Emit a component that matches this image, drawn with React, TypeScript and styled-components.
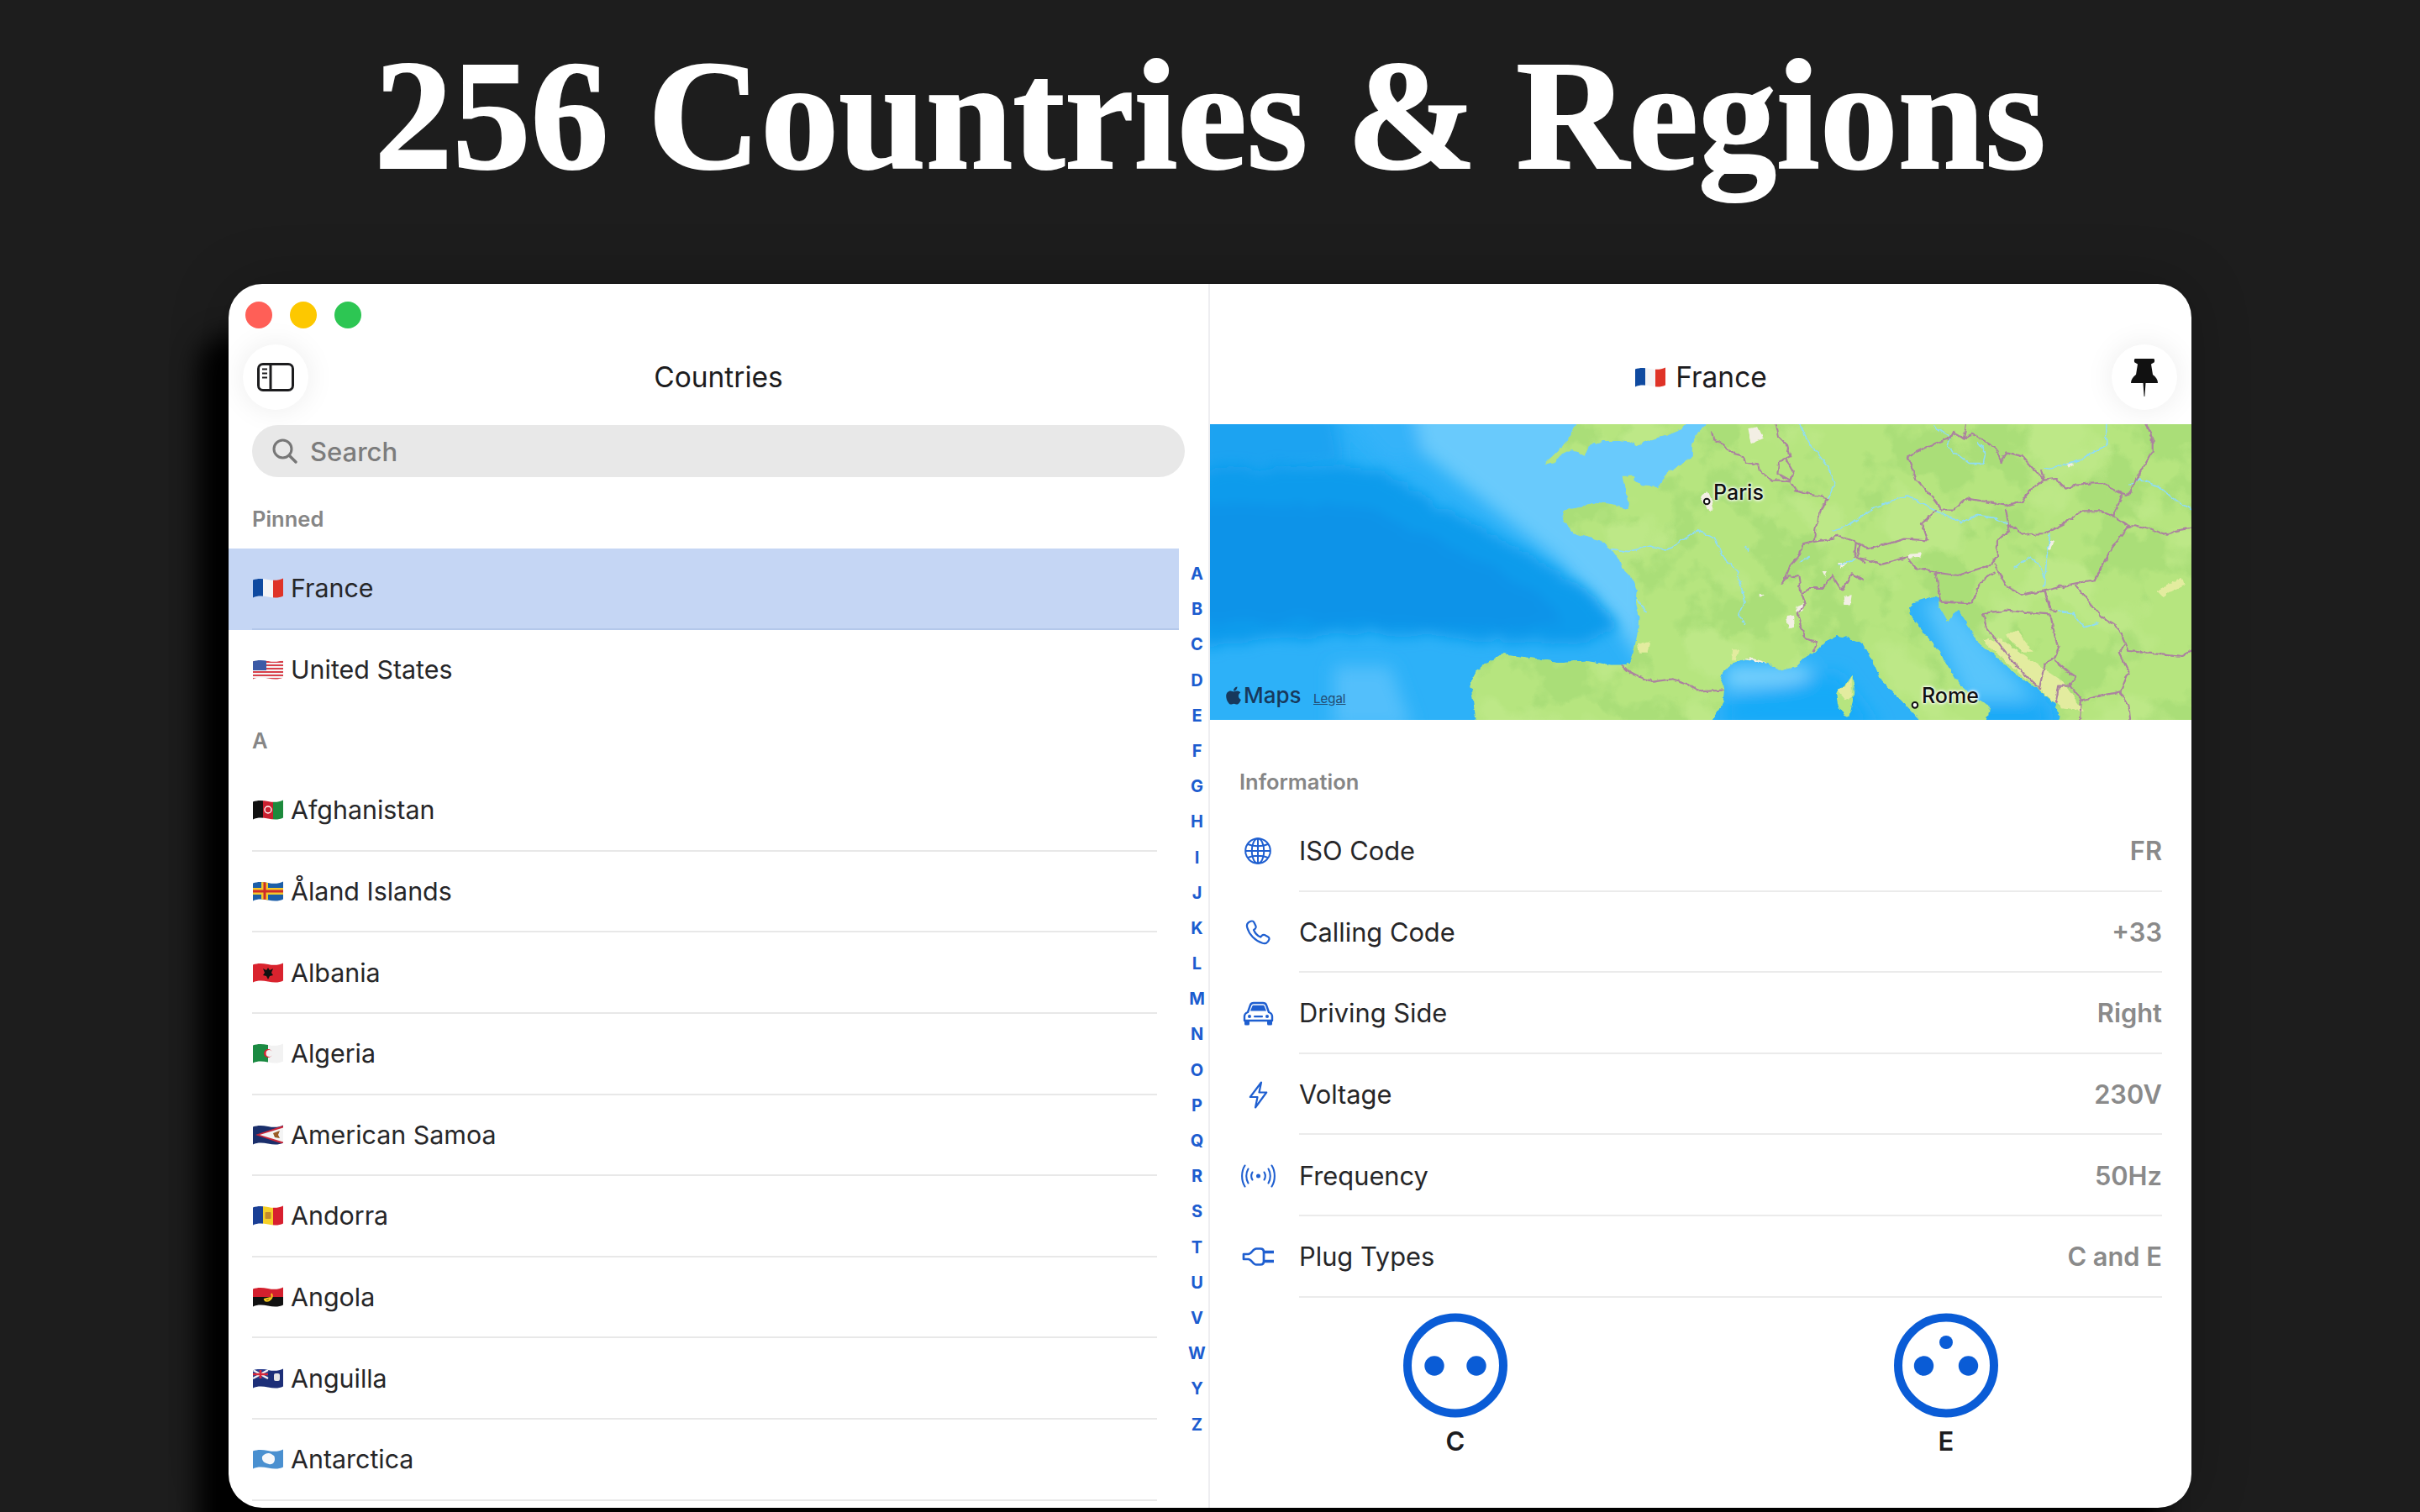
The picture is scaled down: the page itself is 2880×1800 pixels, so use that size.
import { createGlobalStyle, styled } from 'styled-components';
import type { ReactNode } from 'react';
import { FaApple } from 'react-icons/fa';

const GlobalStyle = createGlobalStyle`
    html, body {
        margin: 0;
        background: #1d1d1d;
    }
    body {
        width: 2880px;
        height: 1800px;
        overflow: hidden;
        font-family: Inter, "Liberation Sans", sans-serif;
    }
`

const Page = styled.div`
    display: flex;
    flex-direction: column;
    width: 2880px;
    height: 1800px;
    background: #1d1d1d;
    overflow: hidden;
`

const Headline = styled.h1`
    margin: 0;
    height: 338px;
    padding-top: 37px;
    box-sizing: border-box;
    text-align: center;
    color: #fff;
    font-family: "Liberation Serif", serif;
    font-weight: 700;
    font-size: 186px;
    line-height: 200px;
    white-space: nowrap;
    -webkit-text-stroke: 2px #fff;
`

const Window = styled.div`
    display: flex;
    margin-left: 272px;
    width: 2336px;
    height: 1457px;
    flex-shrink: 0;
    background: #fff;
    border-radius: 40px;
    overflow: hidden;
    box-shadow: -36px 60px 30px #000, 0 0 70px rgba(0, 0, 0, 0.22);
`

const LeftPane = styled.section`
    display: flex;
    flex-direction: column;
    width: 1168px;
    box-sizing: border-box;
    flex-shrink: 0;
    border-right: 2px solid #eeeef1;
`

const RightPane = styled.section`
    display: flex;
    flex-direction: column;
    flex: 1;
    min-width: 0;
`

const TrafficRow = styled.div`
    display: flex;
    align-items: center;
    gap: 21px;
    height: 72px;
    padding: 2px 0 0 20px;
    box-sizing: border-box;
`

const TrafficLight = styled.span<{ $color: string }>`
    width: 32px;
    height: 32px;
    border-radius: 50%;
    background: ${(p) => p.$color};
`

const Toolbar = styled.div`
    display: grid;
    grid-template-columns: 78px 1fr 78px;
    align-items: center;
    height: 78px;
    padding: 0 17px;
`

const RightHeader = styled.div`
    height: 167px;
    display: flex;
    flex-direction: column;
    justify-content: flex-end;
    padding-bottom: 17px;
    box-sizing: border-box;
`

const CircleButton = styled.div`
    display: flex;
    align-items: center;
    justify-content: center;
    width: 78px;
    height: 78px;
    border-radius: 50%;
    background: #fff;
    box-shadow: 0 0 34px rgba(0, 0, 0, 0.08);
`

const ToolbarTitle = styled.div`
    display: flex;
    align-items: center;
    justify-content: center;
    gap: 12px;
    font-size: 33.5px;
    color: #1c1c1e;
`

const SearchBar = styled.div`
    display: flex;
    align-items: center;
    gap: 15px;
    height: 62px;
    margin: 18px 28px 0;
    padding-left: 24px;
    border-radius: 31px;
    background: #e8e8e8;
    color: #7c7c7c;
    font-size: 31px;
    font-weight: 500;
`

const ListArea = styled.div`
    display: flex;
    flex: 1;
    min-height: 0;
`

const List = styled.div`
    flex: 1;
    min-width: 0;
    overflow: hidden;
`

const SectionHeader = styled.div<{ $first?: boolean }>`
    display: flex;
    align-items: center;
    height: 71px;
    margin-top: ${(p) => (p.$first ? '14px' : '0')};
    padding-left: 28px;
    color: #868686;
    font-size: 25.5px;
    font-weight: 600;
`

const CountryRow = styled.div<{ $selected?: boolean }>`
    height: 96.6px;
    padding-left: 28px;
    padding-right: ${(p) => (p.$selected ? '0' : '26px')};
    background: ${(p) => (p.$selected ? '#c5d6f4' : 'transparent')};
`

const CountryInner = styled.div<{ $rule: string }>`
    display: flex;
    align-items: center;
    gap: 9px;
    height: 100%;
    box-sizing: border-box;
    border-bottom: 2px solid ${(p) => p.$rule};
    font-size: 30.4px;
    color: #262628;
`

const AlphaIndex = styled.div`
    display: flex;
    flex-direction: column;
    align-items: center;
    width: 35px;
    box-sizing: border-box;
    padding: 94px 0 0 8px;
    flex-shrink: 0;
`

const AlphaLetter = styled.span`
    height: 42.2px;
    line-height: 42.2px;
    color: #1c5ccf;
    font-size: 20px;
    font-weight: 700;
`

const FlagSvg = styled.svg`
    width: 36px;
    height: 24px;
    flex-shrink: 0;
    margin-left: 1px;
`

const MapBox = styled.div`
    position: relative;
    height: 352px;
    overflow: hidden;
    background: #2db1f8;
`

const MapSvg = styled.svg`
    display: block;
    width: 100%;
    height: 100%;
`

const CityLabel = styled.span<{ $left: number; $top: number }>`
    position: absolute;
    left: ${(p) => p.$left}px;
    top: ${(p) => p.$top}px;
    color: #111;
    font-size: 25px;
    line-height: 30px;
    font-weight: 500;
    text-shadow: 0 0 3px #fff, 0 0 3px #fff, 0 0 5px #fff;
`

const MapsMark = styled.div`
    position: absolute;
    left: 16px;
    top: 307px;
    display: flex;
    align-items: center;
    color: #17395c;
    font-size: 26px;
    line-height: 32px;
    font-weight: 500;
`

const LegalLink = styled.span`
    position: absolute;
    left: 123px;
    top: 318px;
    color: #234a70;
    font-size: 15px;
    line-height: 18px;
    text-decoration: underline;
`

const InfoHeader = styled.div`
    display: flex;
    align-items: flex-end;
    height: 108px;
    padding: 0 0 19px 35px;
    box-sizing: border-box;
    color: #868686;
    font-size: 25.5px;
    font-weight: 600;
`

const InfoRow = styled.div`
    display: flex;
    align-items: stretch;
    height: 96.6px;
    padding: 0 35px 0 36px;
`

const IconCell = styled.div`
    display: flex;
    align-items: center;
    justify-content: center;
    width: 42px;
    margin-right: 28px;
    flex-shrink: 0;
`

const InfoBody = styled.div`
    display: flex;
    flex: 1;
    align-items: center;
    justify-content: space-between;
    box-sizing: border-box;
    padding-top: 1px;
    border-bottom: 2px solid #ebebeb;
    font-size: 30.8px;
    color: #262628;
`

const InfoValue = styled.span`
    color: #8a8a8a;
    font-weight: 600;
`

const PlugGrid = styled.div`
    display: grid;
    grid-template-columns: 1fr 1fr;
    padding-top: 18px;
`

const PlugItem = styled.div`
    display: flex;
    flex-direction: column;
    align-items: center;
    gap: 9px;
    font-size: 31px;
    font-weight: 600;
    color: #1c1c1e;
`

const waveClip = 'M0 2.5C5 .5 11 .5 18 2S31 3 36 .5V21.5C31 24 25 24 18 22.5S5 21 0 23.5Z';

const Flag = ({ name, children }: { name: string; children: ReactNode }) => {
    const id = 'flag-' + name.replace(/\W/g, '');
    return (
        <FlagSvg viewBox="0 0 36 24" aria-hidden>
            <defs>
                <clipPath id={id}><path d={waveClip} /></clipPath>
            </defs>
            <g clipPath={`url(#${id})`}>{children}</g>
        </FlagSvg>
    );
};

const flagArt: Record<string, ReactNode> = {
    France: (
        <>
            <rect width="12" height="24" fill="#0f4aa0" />
            <rect x="12" width="12" height="24" fill="#f4f4f6" />
            <rect x="24" width="12" height="24" fill="#df3327" />
        </>
    ),
    'United States': (
        <>
            <rect width="36" height="24" fill="#f5f5f5" />
            {[2, 6, 10, 14, 18, 22].map((y) => <rect key={y} y={y} width="36" height="2" fill="#d8404a" />)}
            <rect width="16" height="13" fill="#3c5aa6" />
        </>
    ),
    Afghanistan: (
        <>
            <rect width="12" height="24" fill="#111" />
            <rect x="12" width="12" height="24" fill="#c8202f" />
            <rect x="24" width="12" height="24" fill="#1d8a3c" />
            <circle cx="18" cy="12" r="4" fill="none" stroke="#fff" strokeWidth="1.4" />
        </>
    ),
    'Åland Islands': (
        <>
            <rect width="36" height="24" fill="#1c5ea8" />
            <rect x="10" width="8" height="24" fill="#f3c72b" />
            <rect y="8" width="36" height="8" fill="#f3c72b" />
            <rect x="12.5" width="3" height="24" fill="#cf2a2a" />
            <rect y="10.5" width="36" height="3" fill="#cf2a2a" />
        </>
    ),
    Albania: (
        <>
            <rect width="36" height="24" fill="#d9232e" />
            <path d="M18 6l2 3 4-2-2 5 2 3-4 1-2 4-2-4-4-1 2-3-2-5 4 2z" fill="#111" />
        </>
    ),
    Algeria: (
        <>
            <rect width="18" height="24" fill="#1b8a42" />
            <rect x="18" width="18" height="24" fill="#f2f2f2" />
            <circle cx="18" cy="12" r="5" fill="#d92231" />
            <circle cx="19.5" cy="12" r="4" fill="#f2f2f2" />
        </>
    ),
    'American Samoa': (
        <>
            <rect width="36" height="24" fill="#1a2f6b" />
            <path d="M36 1L3 12l33 11z" fill="#c8273a" />
            <path d="M36 3.5L8 12l28 8.5z" fill="#f4f4f4" />
            <path d="M24 10l8-3-2 5 2 4-6-1z" fill="#9a5b26" />
        </>
    ),
    Andorra: (
        <>
            <rect width="12" height="24" fill="#1a3f95" />
            <rect x="12" width="12" height="24" fill="#f6d029" />
            <rect x="24" width="12" height="24" fill="#d8202f" />
            <rect x="14.5" y="8" width="7" height="8" rx="1" fill="#c58a2b" />
        </>
    ),
    Angola: (
        <>
            <rect width="36" height="12" fill="#d3202e" />
            <rect y="12" width="36" height="12" fill="#111" />
            <path d="M14 16a6 6 0 0 0 8-8M13 15l8-2" fill="none" stroke="#f6c91c" strokeWidth="2" />
        </>
    ),
    Anguilla: (
        <>
            <rect width="36" height="24" fill="#1d2f78" />
            <rect width="18" height="12" fill="#2a3d8f" />
            <path d="M0 2l18 10M18 2L0 12" stroke="#f4f4f4" strokeWidth="2.4" />
            <path d="M9 2v10M0 7h18" stroke="#d6273a" strokeWidth="2.6" />
            <rect x="25" y="6" width="7" height="9" rx="2" fill="#e6e6e6" />
        </>
    ),
    Antarctica: (
        <>
            <rect width="36" height="24" fill="#4a90d0" />
            <path d="M11 9c3-4 8-5 11-3s4 2 4 6-3 7-7 6-9-3-8-9z" fill="#f6f8fb" />
        </>
    ),
};

const SidebarIcon = () => (
    <svg width="44" height="34" viewBox="0 0 44 34" fill="none" stroke="#1c1c1e" strokeWidth="3">
        <rect x="1.5" y="1.5" width="41" height="31" rx="5.5" />
        <path d="M16 2v30" />
        <path d="M6 7.5h6M6 12.5h6M6 17.5h6" strokeWidth="2.2" />
    </svg>
);

const SearchIcon = () => (
    <svg width="30" height="30" viewBox="0 0 30 30" fill="none" stroke="#777" strokeWidth="3" strokeLinecap="round">
        <circle cx="12.5" cy="12.5" r="10.5" />
        <path d="M20.5 20.5L28 28" strokeWidth="3.4" />
    </svg>
);

const PinIcon = () => (
    <svg width="32" height="45" viewBox="0 0 32 45" fill="#111">
        <path d="M5 0H27C28.5 0 28.5 4.5 27 4.8L24 6.5 26 19C30 22 32 25 32 29H17.5L16.4 45H15.6L14.5 29H0C0 25 2 22 6 19L8 6.5 5 4.8C3.5 4.5 3.5 0 5 0Z" />
    </svg>
);

const GlobeIcon = () => (
    <svg width="32" height="32" viewBox="0 0 32 32" fill="none" stroke="#1f5fd0" strokeWidth="2">
        <circle cx="16" cy="16" r="14.8" />
        <ellipse cx="16" cy="16" rx="7.2" ry="14.8" />
        <path d="M16 1v30M1.2 16h29.6M4 8c7 3 17 3 24 0M4 24c7-3 17-3 24 0" />
    </svg>
);

const PhoneIcon = () => (
    <svg width="32" height="32" viewBox="0 0 32 32" fill="none" stroke="#1f5fd0" strokeWidth="2.2" strokeLinejoin="round">
        <path d="M9 2.5C10 2.5 11 3.2 11.5 4.2L13.5 8.5C14 9.6 13.7 10.8 12.8 11.6L11 13C12.5 16.8 15.4 20 19.2 21.6L21 19.6C21.8 18.8 23 18.6 24 19.1L28 21.2C29.5 22 30 23.8 29 25.2L28 26.8C26.5 28.8 24 29.6 21.5 28.8C12.5 25.8 5.5 18.5 3.2 10C2.5 7.5 3.5 4.8 5.8 3.5C6.8 2.9 8 2.5 9 2.5Z" />
    </svg>
);

const CarIcon = () => (
    <svg width="37" height="29" viewBox="0 0 37 29" fill="#1f5fd0">
        <path d="M6 13L9 4.5C9.7 2.6 11 2 13 2H24C26 2 27.3 2.6 28 4.5L31 13C33.5 14 35 15.5 35 18V23H2V18C2 15.5 3.5 14 6 13Z" fill="none" stroke="#1f5fd0" strokeWidth="2.4" strokeLinejoin="round" />
        <path d="M9 11.5L11.2 6C11.6 5 12.2 4.8 13 4.8H24C24.8 4.8 25.4 5 25.8 6L28 11.5Z" />
        <circle cx="8" cy="18" r="2" />
        <circle cx="29" cy="18" r="2" />
        <rect x="13" y="17" width="11" height="2.2" rx="1" />
        <rect x="2" y="22" width="6" height="6.5" rx="1.6" />
        <rect x="29" y="22" width="6" height="6.5" rx="1.6" />
    </svg>
);

const BoltIcon = () => (
    <svg width="23" height="33" viewBox="0 0 23 33" fill="none" stroke="#1f5fd0" strokeWidth="2.2" strokeLinejoin="round">
        <path d="M15 1.5L1.8 19H10.5L8 31.5L21.2 13.5H12.5Z" />
    </svg>
);

const WavesIcon = () => (
    <svg width="41" height="28" viewBox="0 0 41 28" fill="none" stroke="#1f5fd0" strokeWidth="2.1" strokeLinecap="round">
        <circle cx="20.5" cy="14" r="2.5" fill="#1f5fd0" stroke="none" />
        <path d="M13.5 9.5C12 12 12 16 13.5 18.5M27.5 9.5C29 12 29 16 27.5 18.5" />
        <path d="M8.5 5.5C5.5 10.5 5.5 17.5 8.5 22.5M32.5 5.5C35.5 10.5 35.5 17.5 32.5 22.5" />
        <path d="M4.5 1.5C0 8.5 0 19.5 4.5 26.5M36.5 1.5C41 8.5 41 19.5 36.5 26.5" />
    </svg>
);

const PlugIcon = () => (
    <svg width="39" height="24" viewBox="0 0 39 24" fill="none" stroke="#1f5fd0" strokeWidth="2.7" strokeLinejoin="round">
        <path d="M2 9H7.5C11.5 9 13 2.5 17 2.5H22C24.5 2.5 26 4 26 6.5V17.5C26 20 24.5 21.5 22 21.5H17C13 21.5 11.5 15 7.5 15H2Z" />
        <path d="M26 6.5H38M26 17.5H38" strokeWidth="3.4" />
    </svg>
);

const SocketIcon = ({ earth }: { earth?: boolean }) => (
    <svg width="124" height="125" viewBox="0 0 124 125" fill="#0a5cd6">
        <circle cx="62" cy="62.5" r="57" fill="none" stroke="#0a5cd6" strokeWidth="10" />
        <circle cx={earth ? 35.5 : 37} cy="63" r="11.7" />
        <circle cx={earth ? 88.5 : 87} cy="63" r="11.7" />
        {earth && <circle cx="62" cy="35" r="8" />}
    </svg>
);

const landShapes = [
    '50,155 85,155 110,125 150,105 195,130 210,90 260,75 320,75 370,80 380,90 430,70 490,55 540,35 565,0 170,0 150,45 120,90 80,130',
    '670,-20 600,45 580,90 580,130 540,160 490,190 475,215 460,240 400,235 375,215 370,200 330,200 340,250 355,300 350,315 290,300 240,295 190,310 115,325 120,360 145,385 155,405 215,420 250,430 290,460 320,500 330,530 370,570 385,610 380,660 390,700 385,760 370,830 355,870 330,875 290,875 200,860 100,865 40,855 0,850 -98,834 -190,893 -213,936 -190,1090 640,1090 690,1010 695,960 685,925 690,900 720,870 760,855 800,860 850,870 900,895 950,880 980,850 1020,830 1060,790 1100,770 1130,775 1140,780 1190,795 1225,860 1255,930 1310,985 1365,1040 1410,1090 1630,1090 1645,1020 1600,1000 1540,950 1490,870 1450,810 1400,750 1365,710 1355,670 1375,650 1440,630 1470,640 1460,660 1495,720 1510,690 1530,680 1570,740 1600,790 1670,850 1740,910 1820,965 1875,1010 1900,1090 2420,1090 2420,-20',
    '1095,975 1130,945 1150,915 1160,940 1155,1000 1140,1060 1120,1050 1100,1020',
];

// traced at 3x page pixels: x = (pageX - 1820) * 3, y = (pageY - 500) * 3
const MapArt = () => (
    <MapSvg viewBox="-1143 15 3507 1056" preserveAspectRatio="none" aria-hidden>
        <defs>
            <filter id="blurWide" x="-20%" y="-20%" width="140%" height="140%"><feGaussianBlur stdDeviation="30" /></filter>
            <filter id="depth" x="-10%" y="-10%" width="120%" height="120%">
                <feTurbulence type="fractalNoise" baseFrequency="0.02" numOctaves="4" seed="11" result="n" />
                <feDisplacementMap in="SourceGraphic" in2="n" scale="60" xChannelSelector="R" yChannelSelector="G" />
                <feGaussianBlur stdDeviation="24" />
            </filter>
            <filter id="rough" x="-3%" y="-3%" width="106%" height="106%">
                <feTurbulence type="fractalNoise" baseFrequency="0.04" numOctaves="3" seed="4" result="n" />
                <feDisplacementMap in="SourceGraphic" in2="n" scale="16" xChannelSelector="R" yChannelSelector="G" />
            </filter>
            <filter id="mottleDark" x="0" y="0" width="100%" height="100%" colorInterpolationFilters="sRGB">
                <feTurbulence type="fractalNoise" baseFrequency="0.005" numOctaves="4" seed="7" />
                <feColorMatrix values="0 0 0 0 0.665  0 0 0 0 0.87  0 0 0 0 0.47  10 0 0 0 -5" />
            </filter>
            <filter id="mottleLight" x="0" y="0" width="100%" height="100%" colorInterpolationFilters="sRGB">
                <feTurbulence type="fractalNoise" baseFrequency="0.004" numOctaves="3" seed="23" />
                <feColorMatrix values="0 0 0 0 0.74  0 0 0 0 0.91  0 0 0 0 0.53  0 8 0 0 -4.6" />
            </filter>
            <clipPath id="landClip">
                {landShapes.map((pts) => <polygon key={pts} points={pts} />)}
            </clipPath>
        </defs>
        <rect x="-1143" y="15" width="3507" height="1056" fill="#2db1f8" />
        <g filter="url(#blurWide)">
            <polygon fill="#34b3f9" points="-680,-40 -420,-40 -380,120 -500,160" />
            <polygon fill="#69cafc" points="-420,-40 700,-40 700,300 420,500 420,900 330,760 100,500 -150,300 -380,120" />
            <polygon fill="#52bffb" points="-700,880 -500,880 -420,1100 -700,1100" />
            <polygon fill="#7ad2fd" points="700,880 1000,880 1000,940 700,960" />
            <polygon fill="#19aaf8" points="700,1000 1100,900 1250,1100 700,1100" />
            <polygon fill="#59c5fb" points="1400,640 1500,640 1800,1000 1560,1000" />
            <polygon fill="#16a8f7" points="1500,1020 1840,1020 1860,1100 1480,1100" />
            <polygon fill="#1aa3f1" points="-1200,-40 -700,-40 -660,160 -1200,240" />
        </g>
        <g filter="url(#depth)">
            <polygon fill="#0b9bec" points="-1200,180 -640,160 -534,180 -328,304 -52,454 200,604 315,743 177,802 -190,786 -626,765 -1200,807" />
            <polygon fill="#0a93e8" points="-1200,300 -600,310 -300,450 0,600 130,730 -100,750 -600,720 -1200,720" />
        </g>
        <g filter="url(#rough)">
            <g fill="#b6e57f">
                {landShapes.map((pts) => <polygon key={pts} points={pts} />)}
            </g>
            <g clipPath="url(#landClip)">
                <rect x="-1143" y="0" width="3560" height="1090" filter="url(#mottleDark)" />
                <rect x="-1143" y="0" width="3560" height="1090" filter="url(#mottleLight)" />
                <g fill="#e3ec9f">
                    <polygon points="1620,790 1680,780 1780,850 1900,930 1980,1040 1900,1030 1820,960 1720,880" />
                    <polygon points="1700,770 1740,750 1800,830 1760,830" />
                    <polygon points="385,800 430,790 420,830 390,830" />
                    <polygon points="725,820 750,820 735,860 722,855" />
                    <polygon points="2240,610 2330,560 2340,590 2260,630" />
                    <polygon points="1100,970 1130,950 1150,920 1150,990 1125,1000" />
                </g>
                <g fill="#f3efe4">
                    <polygon points="610,275 635,255 655,300 650,325 625,305" />
                    <polygon points="915,700 945,695 945,740 925,745" />
                    <polygon points="950,665 980,655 975,685 955,690" />
                    <polygon points="1120,630 1150,625 1145,660 1125,660" />
                    <polygon points="780,30 815,25 835,65 790,85" />
                    <polygon points="1045,540 1065,540 1055,560" />
                    <polygon points="1100,510 1135,510 1110,530" />
                    <polygon points="1350,480 1400,475 1395,490 1355,495" />
                    <polygon points="1860,430 1875,435 1860,465 1850,460" />
                    <polygon points="1915,150 1945,155 1925,170" />
                    <polygon points="820,620 835,625 820,635" />
                    <polygon points="760,855 800,860 850,875 840,865 790,850" />
                </g>
            </g>
            <g fill="none" stroke="#8fdcf6" strokeWidth="5" strokeLinejoin="round">
                <polyline points="290,460 350,470 430,450 490,465 600,395 660,420 690,490 740,540 770,650 745,700 770,730" />
                <polyline points="960,15 1010,100 1065,165 1090,225 1065,280" />
                <polyline points="1080,395 1140,375 1240,310 1350,270 1450,325 1540,365 1600,340 1660,350 1710,370" />
                <polyline points="1440,20 1500,60 1490,95 1570,155 1620,155 1630,115 1600,80" />
                <polyline points="2060,15 2060,90 1960,145 1840,175" />
                <polyline points="2140,235 2180,210 2250,240 2310,290 2365,320" />
                <polyline points="1860,405 1845,500 1840,600" />
                <polyline points="1730,525 1790,490 1830,530 1840,570" />
                <polyline points="1890,680 1940,690 1980,740 2030,725" />
                <polyline points="770,450 785,470" />
                <polyline points="385,640 415,690" />
                <polyline points="960,510 1000,490" />
                <polyline points="1100,520 1160,500" />
            </g>
            <g fill="none" stroke="#ab829f" strokeWidth="6.5" strokeLinejoin="round" strokeLinecap="round">
                <polyline points="650,40 655,70 690,85 705,105 730,120 765,130 770,155 815,160 820,180 860,215 890,215 930,220 950,250 1000,265 1065,280 1040,320 1020,390 1015,435 975,445 965,480 930,520 910,570 900,585 930,555 960,560 970,620 985,660 955,690 970,740 985,780 1025,795 1015,825" />
                <polyline points="330,875 360,905 440,935 510,925 570,945 610,970 690,965" />
                <polyline points="880,15 890,60 920,90 930,130 890,150 885,190 930,215 940,185 915,140" />
                <polyline points="1015,435 1085,425 1095,410 1180,440 1170,490 1200,510" />
                <polyline points="970,620 1000,600 1050,600 1080,555 1115,610 1150,550 1190,570" />
                <polyline points="1560,15 1550,65 1510,45 1500,65 1430,90 1350,130 1380,210 1440,280 1470,320 1515,320 1560,280 1620,290 1700,305 1760,290 1790,245 1840,215 1830,180" />
                <polyline points="1550,65 1580,50 1660,95 1685,150 1705,115 1760,130 1790,165 1840,215 1880,210 1915,245 1950,230 2040,225 2130,270 2140,265 2190,175 2225,110 2225,60 2200,15" />
                <polyline points="1450,325 1400,370 1420,430 1340,425 1210,460 1165,435 1160,490 1210,500 1260,515 1350,490 1380,530 1450,545 1530,555 1640,520 1670,490 1670,430 1715,395 1700,320" />
                <polyline points="1715,375 1760,410 1840,405 1910,370 1970,325 2040,325 2085,345 2140,380 2070,470 2020,570 1940,585 1840,610 1760,625 1700,590 1660,515" />
                <polyline points="2085,345 2115,270" />
                <polyline points="2140,385 2160,375 2280,410 2310,395 2365,385" />
                <polyline points="1450,550 1460,600 1470,650 1580,655 1610,580 1660,545" />
                <polyline points="1620,690 1700,680 1860,695 1880,790 1890,810 1875,850 1840,870 1820,960" />
                <polyline points="1620,690 1630,740 1670,790 1740,880 1820,960" />
                <polyline points="1840,610 1860,680 1885,685" />
                <polyline points="1950,590 1990,640 2040,700 2100,740 2130,800 2140,825 2320,845 2365,825" />
                <polyline points="2130,800 2105,830 2140,900 2110,970 2140,1020 2145,1071" />
                <polyline points="2110,970 1970,1000 1965,1071" />
                <polyline points="1875,860 1950,920 1930,950 1970,1000" />
                <polyline points="1930,950 1890,950 1880,1010" />
            </g>
        </g>
        <circle cx="632" cy="291" r="10" fill="#fff" stroke="#111" strokeWidth="6" />
        <circle cx="1376" cy="1018" r="10" fill="#fff" stroke="#111" strokeWidth="6" />
    </MapSvg>
);

const lights = ['#ff5f57', '#fdc800', '#2dc653'];
const groups: { title: string; names: string[] }[] = [
    { title: 'Pinned', names: ['France', 'United States'] },
    {
        title: 'A',
        names: ['Afghanistan', 'Åland Islands', 'Albania', 'Algeria', 'American Samoa', 'Andorra', 'Angola', 'Anguilla', 'Antarctica'],
    },
];
const letters = 'ABCDEFGHIJKLMNOPQRSTUVWYZ'.split('');
const infoRows = [
    { icon: <GlobeIcon />, label: 'ISO Code', value: 'FR' },
    { icon: <PhoneIcon />, label: 'Calling Code', value: '+33' },
    { icon: <CarIcon />, label: 'Driving Side', value: 'Right' },
    { icon: <BoltIcon />, label: 'Voltage', value: '230V' },
    { icon: <WavesIcon />, label: 'Frequency', value: '50Hz' },
    { icon: <PlugIcon />, label: 'Plug Types', value: 'C and E' },
];

const ruleFor = (name: string) => {
    if (name === 'France') return '#b4c8ea';
    if (name === 'United States') return 'transparent';
    return '#e8e8e8';
};

export default function App() {
    return (
        <Page>
            <GlobalStyle />
            <Headline>256 Countries &amp; Regions</Headline>
            <Window>
                <LeftPane>
                    <TrafficRow>
                        {lights.map((c) => <TrafficLight key={c} $color={c} />)}
                    </TrafficRow>
                    <Toolbar>
                        <CircleButton><SidebarIcon /></CircleButton>
                        <ToolbarTitle>Countries</ToolbarTitle>
                    </Toolbar>
                    <SearchBar>
                        <SearchIcon />
                        Search
                    </SearchBar>
                    <ListArea>
                        <List>
                            {groups.map((group, i) => (
                                <div key={group.title}>
                                    <SectionHeader $first={i === 0}>{group.title}</SectionHeader>
                                    {group.names.map((name) => (
                                        <CountryRow key={name} $selected={name === 'France'}>
                                            <CountryInner $rule={ruleFor(name)}>
                                                <Flag name={name}>{flagArt[name]}</Flag>
                                                {name}
                                            </CountryInner>
                                        </CountryRow>
                                    ))}
                                </div>
                            ))}
                        </List>
                        <AlphaIndex>
                            {letters.map((l) => <AlphaLetter key={l}>{l}</AlphaLetter>)}
                        </AlphaIndex>
                    </ListArea>
                </LeftPane>
                <RightPane>
                    <RightHeader>
                        <Toolbar>
                            <span />
                            <ToolbarTitle>
                                <Flag name="France title">{flagArt.France}</Flag>
                                France
                            </ToolbarTitle>
                            <CircleButton><PinIcon /></CircleButton>
                        </Toolbar>
                    </RightHeader>
                    <MapBox>
                        <MapArt />
                        <CityLabel $left={599} $top={66}>Paris</CityLabel>
                        <CityLabel $left={847} $top={308}>Rome</CityLabel>
                        <MapsMark><FaApple size={24} />Maps</MapsMark>
                        <LegalLink>Legal</LegalLink>
                    </MapBox>
                    <InfoHeader>Information</InfoHeader>
                    {infoRows.map((row) => (
                        <InfoRow key={row.label}>
                            <IconCell>{row.icon}</IconCell>
                            <InfoBody>
                                {row.label}
                                <InfoValue>{row.value}</InfoValue>
                            </InfoBody>
                        </InfoRow>
                    ))}
                    <PlugGrid>
                        <PlugItem><SocketIcon />C</PlugItem>
                        <PlugItem><SocketIcon earth />E</PlugItem>
                    </PlugGrid>
                </RightPane>
            </Window>
        </Page>
    );
}
